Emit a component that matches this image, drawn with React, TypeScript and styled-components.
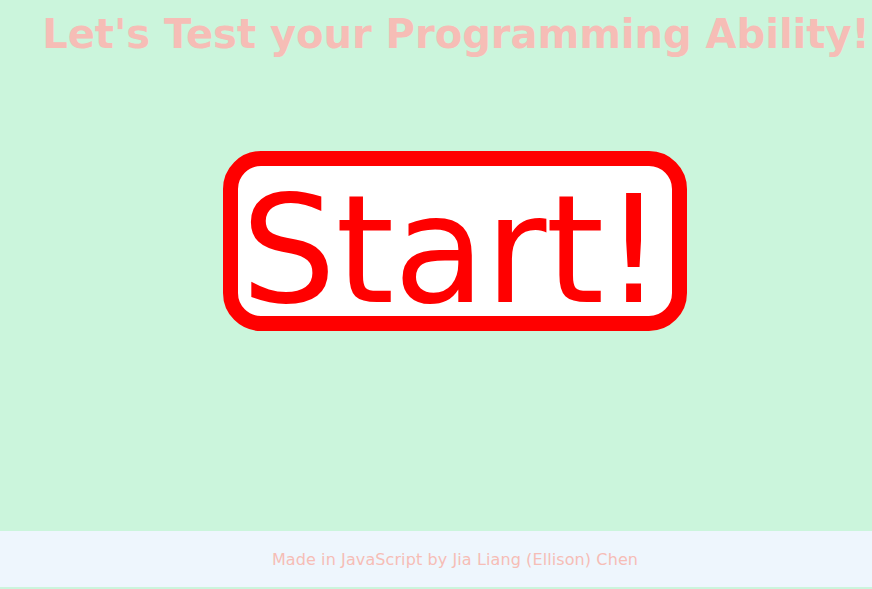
import React from "react";
import styled, { createGlobalStyle } from "styled-components";

const Global = createGlobalStyle`
  html, body { margin: 0; padding: 0; background: #cbf5dc; }
  body { font-family: "DejaVu Sans", Verdana, sans-serif; overflow: hidden; }
`;

const Page = styled.div`
  display: flex;
  flex-direction: column;
  width: 872px;
  height: 589px;
  background: #cbf5dc;
`;

const Header = styled.header`
  display: flex;
  justify-content: center;
  padding-left: 40px;
  height: 70px;
  white-space: nowrap;
`;

const Title = styled.h1`
  margin: 0;
  padding-top: 10px;
  font-family: "DejaVu Sans", Verdana, sans-serif;
  font-weight: bold;
  font-size: 40px;
  line-height: 48px;
  color: #f6bdb6;
`;

const Main = styled.main`
  display: flex;
  justify-content: center;
  padding-left: 38px;
  padding-top: 81px;
  height: 461px;
  box-sizing: border-box;
`;

const StartButton = styled.button`
  box-sizing: border-box;
  width: 464px;
  height: 180px;
  border: 15px solid #ff0000;
  border-radius: 38px;
  background: #ffffff;
  color: #ff0000;
  font-family: "DejaVu Sans", Verdana, sans-serif;
  font-size: 150px;
  line-height: 150px;
  padding: 18px 6px 0 0;
  cursor: pointer;
  display: flex;
  align-items: center;
  justify-content: center;
  letter-spacing: -0.8px;
`;

const Footer = styled.footer`
  display: flex;
  align-items: center;
  justify-content: center;
  padding-left: 38px;
  height: 56px;
  background: #eef6fd;
  color: #f6bdb6;
  font-family: "DejaVu Sans", Verdana, sans-serif;
  font-size: 16px;
  letter-spacing: 0.1px;
`;

export default function App() {
  return (
    <>
      <Global />
      <Page>
        <Header>
          <Title>Let's Test your Programming Ability!</Title>
        </Header>
        <Main>
          <StartButton>Start!</StartButton>
        </Main>
        <Footer>Made in JavaScript by Jia Liang (Ellison) Chen</Footer>
      </Page>
    </>
  );
}
